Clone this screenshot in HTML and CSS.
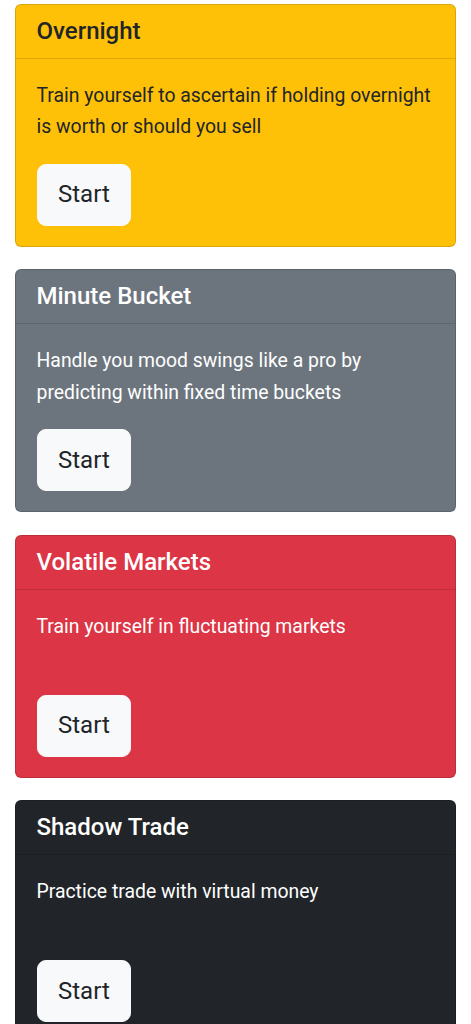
FILE: index.html
```html
<!DOCTYPE html>
<html lang="en">
<head>
<meta charset="utf-8">
<meta name="viewport" content="width=device-width, initial-scale=1">
<title>Training</title>
<link rel="stylesheet" href="styles.css">
</head>
<body>
<main class="list">
  <section class="card card-warning">
    <header class="card-header"><h5 class="card-title">Overnight</h5></header>
    <div class="card-body">
      <p class="card-text">Train yourself to ascertain if holding overnight is worth or should you sell</p>
      <button class="btn">Start</button>
    </div>
  </section>
  <section class="card card-secondary">
    <header class="card-header"><h5 class="card-title">Minute Bucket</h5></header>
    <div class="card-body">
      <p class="card-text">Handle you mood swings like a pro by predicting within fixed time buckets</p>
      <button class="btn">Start</button>
    </div>
  </section>
  <section class="card card-danger">
    <header class="card-header"><h5 class="card-title">Volatile Markets</h5></header>
    <div class="card-body">
      <p class="card-text">Train yourself in fluctuating markets</p>
      <button class="btn">Start</button>
    </div>
  </section>
  <section class="card card-dark">
    <header class="card-header"><h5 class="card-title">Shadow Trade</h5></header>
    <div class="card-body">
      <p class="card-text">Practice trade with virtual money</p>
      <button class="btn">Start</button>
    </div>
  </section>
</main>
</body>
</html>
```
FILE: styles.css
```css
body {
  margin: 0;
  font-family: Roboto, "Liberation Sans", sans-serif;
  font-size: 19.4px;
  line-height: 31.2px;
  color: #212529;
  background: #fff;
}
.list {
  display: flex;
  flex-direction: column;
  gap: 22.6px;
  padding: 4px 15px 20px;
}
.card {
  border: 1px solid rgba(0,0,0,.15);
  border-radius: 6px;
  overflow: hidden;
}
.card-header {
  padding: 10.9px 20.5px;
  border-bottom: 1px solid rgba(0,0,0,.125);
}
.card-title {
  margin: 0;
  font-size: 24px;
  font-weight: 500;
  line-height: 31.2px;
}
.card-body {
  padding: 21px 20.5px 20px;
}
.card-text {
  margin: 0 0 21.5px;
  min-height: 62.4px;
}
.btn {
  display: block;
  font-family: inherit;
  font-size: 24px;
  line-height: 39px;
  height: 62px;
  padding: 10.5px 20.5px;
  color: #212529;
  background: #f8f9fa;
  border: 1px solid #f8f9fa;
  border-radius: 9px;
}
.card-warning { background: #ffc107; color: #212529; }
.card-secondary { background: #6c757d; color: #fff; }
.card-danger { background: #dc3545; color: #fff; }
.card-dark { background: #212529; color: #fff; }
```
